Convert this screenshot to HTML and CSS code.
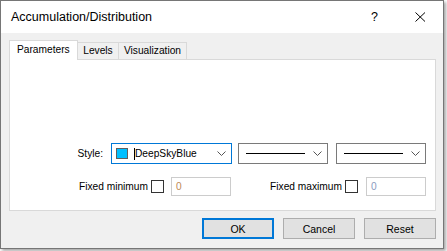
FILE: index.html
```html
<!DOCTYPE html>
<html>
<head>
<meta charset="utf-8">
<link rel="stylesheet" href="styles.css">
</head>
<body>
<div class="window">
  <div class="titlebar">
    <span class="title">Accumulation/Distribution</span>
    <span class="help">?</span>
    <span class="close"><svg width="11" height="10" viewBox="0 0 11 10"><path d="M0.5 0.5 L10 9.5 M10 0.5 L0.5 9.5" stroke="#000" stroke-width="1" fill="none"/></svg></span>
  </div>
  <div class="body">
    <div class="tabs">
      <div class="tab active">Parameters</div>
      <div class="tab levels">Levels</div>
      <div class="tab vis">Visualization</div>
    </div>
    <div class="panel">
      <div class="row style-row">
        <span class="lbl style-lbl">Style:</span>
        <div class="select color-select">
          <span class="swatch"></span>
          <span class="caret"></span>
          <span class="sel-text">DeepSkyBlue</span>
          <svg class="chev" width="9" height="5" viewBox="0 0 9 5"><path d="M0.5 0.5 L4.5 4.5 L8.5 0.5" stroke="#555" fill="none"/></svg>
        </div>
        <div class="select line-select first">
          <span class="line"></span>
          <svg class="chev" width="9" height="5" viewBox="0 0 9 5"><path d="M0.5 0.5 L4.5 4.5 L8.5 0.5" stroke="#555" fill="none"/></svg>
        </div>
        <div class="select line-select second">
          <span class="line"></span>
          <svg class="chev" width="9" height="5" viewBox="0 0 9 5"><path d="M0.5 0.5 L4.5 4.5 L8.5 0.5" stroke="#555" fill="none"/></svg>
        </div>
      </div>
      <div class="row fixed-row">
        <span class="lbl min-lbl">Fixed minimum</span>
        <span class="check"></span>
        <div class="input">0</div>
        <span class="lbl max-lbl">Fixed maximum</span>
        <span class="check"></span>
        <div class="input max-input">0</div>
      </div>
    </div>
    <div class="buttons">
      <div class="btn ok">OK</div>
      <div class="btn">Cancel</div>
      <div class="btn">Reset</div>
    </div>
  </div>
</div>
</body>
</html>
```
FILE: styles.css
```css
* { box-sizing: border-box; }
html, body { margin: 0; padding: 0; background: #ffffff; }
body {
  font-family: "Liberation Sans", Arial, sans-serif;
  font-size: 10.2px;
  color: #000;
  width: 447px;
  height: 251px;
  overflow: hidden;
}
.window {
  width: 444px;
  height: 249px;
  border: 1px solid #767676;
  box-shadow: 2px 2px 3px rgba(0,0,0,0.35);
  display: flex;
  flex-direction: column;
  background: #f0f0f0;
}
.titlebar {
  height: 32px;
  background: #fff;
  display: flex;
  align-items: center;
  padding-left: 10px;
}
.title {
  font-size: 12.5px;
  flex: 1;
  padding-bottom: 1px;
}
.help {
  font-size: 12.5px;
  width: 12px;
  margin-right: 32px;
  padding-bottom: 1px;
}
.close {
  display: flex;
  width: 11px;
  margin-right: 17px;
}
.body {
  flex: 1;
  padding: 7px 7px 0 8px;
  display: flex;
  flex-direction: column;
}
.tabs {
  display: flex;
  align-items: flex-end;
  height: 19px;
}
.tab {
  height: 17px;
  border-top: 1px solid #d9d9d9;
  border-right: 1px solid #d9d9d9;
  background: #f0f0f0;
  display: flex;
  align-items: center;
  justify-content: center;
  padding-bottom: 1px;
  white-space: nowrap;
}
.tab.active {
  height: 20px;
  width: 69px;
  margin-bottom: -1px;
  border-left: 1px solid #d9d9d9;
  background: #fff;
  position: relative;
  z-index: 1;
  justify-content: flex-start;
  padding-left: 7px;
  padding-bottom: 3px;
}
.tab.levels { width: 41px; }
.tab.vis { width: 68px; }
.panel {
  width: 427px;
  height: 152px;
  background: #fff;
  border: 1px solid #d9d9d9;
  padding-top: 83px;
}
.row {
  display: flex;
  align-items: center;
}
.lbl { white-space: nowrap; flex: none; text-align: right; }
.style-row {
  height: 21px;
  padding-left: 50px;
}
.style-lbl { width: 43px; margin-right: 8px; }
.select {
  flex: none;
  height: 21px;
  border: 1px solid #7a7a7a;
  display: flex;
  align-items: center;
  position: relative;
  background: #fff;
}
.color-select {
  width: 121px;
  border-color: #0078d7;
}
.swatch {
  width: 12px;
  height: 11px;
  background: #00bfff;
  border: 1px solid #5f5f5f;
  margin-left: 4px;
  margin-right: 6px;
}
.caret {
  width: 1px;
  height: 12px;
  background: #000;
}
.sel-text { flex: 1; white-space: nowrap; }
.chev { margin-right: 5px; flex: none; }
.line-select.first { width: 90px; margin-left: 6px; }
.line-select.second { width: 90px; margin-left: 8px; }
.line {
  height: 1px;
  background: #000;
  margin-left: 7px;
  width: 59px;
  flex: none;
  margin-right: auto;
}
.fixed-row {
  margin-top: 13px;
  height: 19px;
  padding-left: 61px;
}
.min-lbl { width: 77px; }
.max-lbl { width: 80px; margin-left: 31px; }
.check {
  flex: none;
  width: 13px;
  height: 13px;
  border: 1px solid #333;
  margin-left: 3px;
  background: #fff;
}
.input {
  flex: none;
  width: 60px;
  height: 19px;
  border: 1px solid #cccccc;
  margin-left: 7px;
  padding-left: 4px;
  display: flex;
  align-items: center;
  color: #c08a55;
}
.input.max-input { margin-left: 8px; color: #8a9cc0; }
.buttons {
  display: flex;
  justify-content: flex-end;
  gap: 9px;
  margin-top: 7px;
}
.btn {
  width: 72px;
  height: 21px;
  background: #e1e1e1;
  border: 1px solid #adadad;
  display: flex;
  align-items: center;
  justify-content: center;
  font-size: 10.5px;
}
.btn.ok { border: 2px solid #0078d7; }
```
